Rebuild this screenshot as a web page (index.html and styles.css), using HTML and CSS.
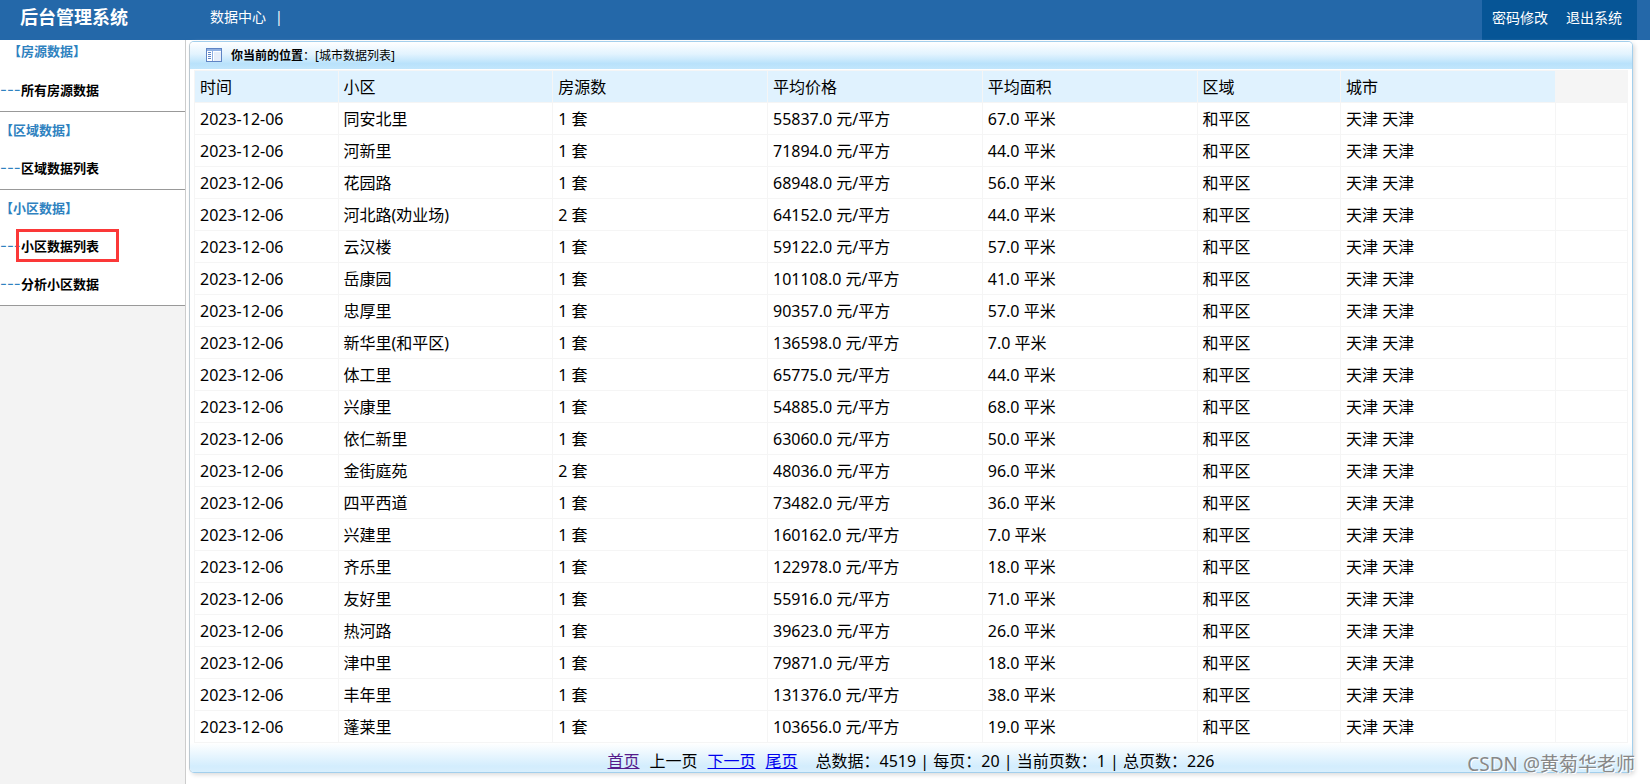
FILE: index.html
```html
<!DOCTYPE html>
<html lang="zh-CN">
<head>
    <meta charset="UTF-8">
    <meta name="viewport" content="width=device-width, initial-scale=1.0">
    <title>后台管理系统</title>
    <link rel="stylesheet" href="styles.css">
</head>
<body>
    <header class="top">
        <h1 class="brand">后台管理系统</h1>
        <nav class="top-nav"><a href="#">数据中心</a><span>|</span></nav>
        <div class="user-links">
            <a href="#">密码修改</a>
            <a href="#">退出系统</a>
        </div>
    </header>

    <div class="main">
        <aside class="sidebar">
            <section class="group group-first">
                <h2>【房源数据】</h2>
                <div class="item"><span class="dash">---</span><a href="#">所有房源数据</a></div>
            </section>
            <section class="group">
                <h2>【区域数据】</h2>
                <div class="item"><span class="dash">---</span><a href="#">区域数据列表</a></div>
            </section>
            <section class="group">
                <h2>【小区数据】</h2>
                <div class="item marked"><span class="dash">---</span><a href="#">小区数据列表</a></div>
                <div class="item"><span class="dash">---</span><a href="#">分析小区数据</a></div>
            </section>
        </aside>

        <main class="content">
            <div class="panel">
                <div class="position">
                    <svg class="icon" width="16" height="14" viewBox="0 0 16 14">
                        <rect x="0.5" y="0.5" width="15" height="13" fill="#fff" stroke="#5f84c4"/>
                        <rect x="1" y="1" width="14" height="2" fill="#8fb0e2"/>
                        <rect x="6" y="3" width="1" height="10" fill="#8fb0e2"/>
                        <rect x="8" y="4" width="7" height="9" fill="#e6eefa"/>
                        <path d="M2 4.5h3M2 6.5h3M2 8.5h3M2 10.5h3" stroke="#5f84c4"/>
                    </svg>
                    <span><strong>你当前的位置</strong>：[城市数据列表]</span>
                </div>

                <table class="list">
                    <colgroup>
                        <col class="w10"><col class="w15"><col class="w15"><col class="w15">
                        <col class="w15"><col class="w10"><col class="w15"><col class="w5">
                    </colgroup>
                    <thead>
                        <tr>
                            <th>时间</th>
                            <th>小区</th>
                            <th>房源数</th>
                            <th>平均价格</th>
                            <th>平均面积</th>
                            <th>区域</th>
                            <th>城市</th>
                            <td class="blank"></td>
                        </tr>
                    </thead>
                    <tbody id="list-body"></tbody>
                </table>

                <div class="pager">
                    <a class="visited" href="#">首页</a>
                    <span>上一页</span>
                    <a href="#">下一页</a>
                    <a href="#">尾页</a>
                    <span class="total">总数据：4519 | 每页：20 | 当前页数：1 | 总页数：226</span>
                </div>
            </div>
        </main>
    </div>

    <div class="watermark">CSDN @黄菊华老师</div>

    <script>
        // 小区, 房源数, 平均价格, 平均面积
        const rows = [
            ['同安北里', 1, 55837, 67],
            ['河新里', 1, 71894, 44],
            ['花园路', 1, 68948, 56],
            ['河北路(劝业场)', 2, 64152, 44],
            ['云汉楼', 1, 59122, 57],
            ['岳康园', 1, 101108, 41],
            ['忠厚里', 1, 90357, 57],
            ['新华里(和平区)', 1, 136598, 7],
            ['体工里', 1, 65775, 44],
            ['兴康里', 1, 54885, 68],
            ['依仁新里', 1, 63060, 50],
            ['金街庭苑', 2, 48036, 96],
            ['四平西道', 1, 73482, 36],
            ['兴建里', 1, 160162, 7],
            ['齐乐里', 1, 122978, 18],
            ['友好里', 1, 55916, 71],
            ['热河路', 1, 39623, 26],
            ['津中里', 1, 79871, 18],
            ['丰年里', 1, 131376, 38],
            ['蓬莱里', 1, 103656, 19]
        ];

        document.getElementById('list-body').innerHTML = rows.map(r => `
            <tr>
                <td>2023-12-06</td>
                <td>${r[0]}</td>
                <td>${r[1]} 套</td>
                <td>${r[2].toFixed(1)} 元/平方</td>
                <td>${r[3].toFixed(1)} 平米</td>
                <td>和平区</td>
                <td>天津 天津</td>
                <td></td>
            </tr>`).join('');
    </script>
</body>
</html>
```
FILE: styles.css
```css
*,
*::after {
    box-sizing: border-box;
}

body {
    margin: 0;
    min-height: 100vh;
    display: flex;
    flex-direction: column;
    position: relative;
    font-family: "Noto Sans", "Noto Sans CJK SC", sans-serif;
    font-size: 16px;
    color: #000;
    background: #fff;
}

a {
    color: inherit;
    text-decoration: none;
}

/* header */
.top {
    display: flex;
    height: 40px;
    padding: 0 13px 0 20px;
    background: #2468a9;
    color: #fff;
    font-size: 14px;
    line-height: 34px;
}

.brand {
    margin: 0;
    width: 190px;
    font-size: 18px;
    line-height: 34px;
}

.top-nav {
    display: flex;
    gap: 9px;
    flex: 1;
}

.user-links {
    display: flex;
    gap: 18px;
    padding: 0 15px 0 10px;
    background: #065596;
    line-height: 36px;
}

.main {
    display: flex;
    flex: 1;
}

/* left menu */
.sidebar {
    width: 186px;
    flex-shrink: 0;
    border-right: 1px solid #ccc;
    background: #f3f3f3;
    font-size: 13px;
    font-weight: bold;
}

.group {
    padding-bottom: 2px;
    border-bottom: 1px solid #999;
    background: #fff;
}

.group h2 {
    margin: 0;
    font-size: 13px;
    line-height: 37px;
    color: #2f82c0;
}

.group-first h2 {
    padding: 0 0 8px 8px;
    line-height: 23px;
}

.item {
    display: flex;
    position: relative;
    line-height: 38px;
}

.dash {
    width: 21px;
    flex-shrink: 0;
    white-space: nowrap;
    font-family: Inter, sans-serif;
    font-size: 15px;
    font-weight: normal;
    color: #2f82c0;
}

.marked::after {
    content: "";
    position: absolute;
    left: 16px;
    top: 2px;
    width: 103px;
    height: 33px;
    border: 3px solid #fb3838;
    pointer-events: none;
}

/* right side */
.content {
    flex: 1;
    padding: 1px 17px 10px 3px;
}

.panel {
    border: 1px solid #a3cfec;
    border-left-color: #bcc8d0;
    border-radius: 5px;
    box-shadow: 2px 2px 4px #ddd;
    overflow: hidden;
}

.position {
    display: flex;
    align-items: center;
    gap: 9px;
    height: 27px;
    padding: 0 0 2px 16px;
    background: linear-gradient(#fff, #e2f3fe 45%, #b9e2fb 80%, #c2e6fc);
    font-size: 12px;
}

.list {
    width: calc(100% - 8px);
    margin: 1px 4px 0;
    table-layout: fixed;
    border-collapse: separate;
    border-spacing: 1px;
    background: #f5f5f5;
}

.list th,
.list td {
    height: 31px;
    padding: 0 5px;
    line-height: 24px;
    font-weight: normal;
    text-align: left;
    background: #fff;
}

.list th {
    background: #e0f2fe;
}

.list .blank {
    background: #f5f5f5;
}

.w5 {
    width: 5%;
}

.w10 {
    width: 10%;
}

.w15 {
    width: 15%;
}

.pager {
    display: flex;
    justify-content: center;
    gap: 10px;
    height: 29px;
    line-height: 36px;
    background: linear-gradient(#fff, #d3edfd 80%, #d8effd);
}

.pager a {
    color: #00e;
    text-decoration: underline;
}

.pager .visited {
    color: #551a8b;
}

.total {
    margin-left: 8px;
}

.watermark {
    position: absolute;
    right: 15px;
    bottom: 6px;
    font-size: 19px;
    line-height: 28px;
    color: #888;
    text-shadow: 1px 1px 0 #fff;
}
```
